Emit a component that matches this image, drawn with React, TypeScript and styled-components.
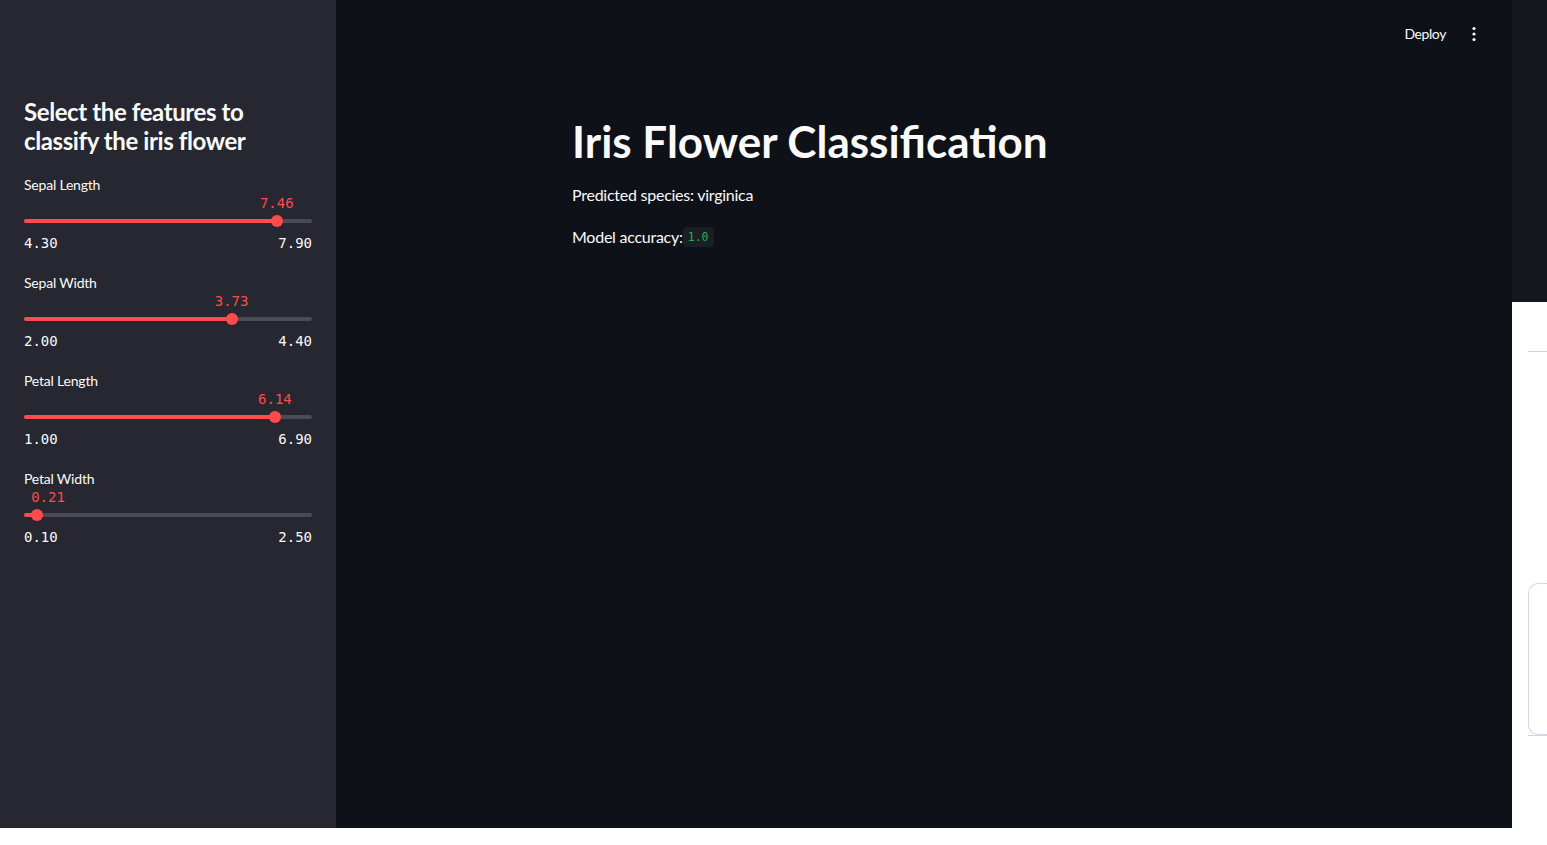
import React from "react";
import styled, { createGlobalStyle } from "styled-components";

const Global = createGlobalStyle`
  html, body { margin: 0; padding: 0; background: #ffffff; }
  body { font-family: Lato, "Noto Sans", sans-serif; }
  * { box-sizing: border-box; }
`;

const Page = styled.div`
  display: flex;
  flex-direction: row;
  width: 1547px;
  height: 845px;
  align-items: flex-start;
`;

const AppFrame = styled.div`
  display: flex;
  flex-direction: row;
  width: 1512px;
  height: 828px;
  flex-shrink: 0;
`;

const Sidebar = styled.aside`
  width: 336px;
  height: 100%;
  background: #262730;
  padding: 98px 24px 0 24px;
  display: flex;
  flex-direction: column;
  gap: 18px;
  color: #fafafa;
`;

const SideHeading = styled.h2`
  margin: 0 0 0.5px 0;
  font-family: Lato, sans-serif;
  font-weight: 700;
  font-size: 24px;
  line-height: 28.8px;
  letter-spacing: -0.4px;
  color: #fafafa;
`;

const SliderBlock = styled.div`
  display: flex;
  flex-direction: column;
`;

const SliderLabel = styled.div`
  font-family: Lato, sans-serif;
  font-size: 14px;
  line-height: 21px;
  height: 21px;
  color: #fafafa;
  letter-spacing: -0.2px;
`;

const ValueRow = styled.div`
  position: relative;
  height: 17px;
`;

const ThumbValue = styled.span<{ $edge: boolean }>`
  position: absolute;
  top: 0;
  transform: ${(p) => (p.$edge ? "none" : "translateX(-50%)")};
  font-family: "DejaVu Sans Mono", "Liberation Mono", monospace;
  font-size: 14px;
  line-height: 17px;
  color: #ff4b4b;
  white-space: nowrap;
`;

const TrackRow = styled.div`
  position: relative;
  height: 17px;
  display: flex;
  align-items: center;
`;

const Track = styled.div`
  position: relative;
  width: 100%;
  height: 4px;
  border-radius: 2px;
  background: #4a4b55;
`;

const Fill = styled.div`
  position: absolute;
  left: 0;
  top: 0;
  height: 4px;
  border-radius: 2px;
  background: #ff4b4b;
`;

const Thumb = styled.div`
  position: absolute;
  top: 50%;
  width: 12px;
  height: 12px;
  border-radius: 50%;
  background: #ff4b4b;
  transform: translate(-50%, -50%);
`;

const TickRow = styled.div`
  margin-top: 4px;
  display: flex;
  justify-content: space-between;
  font-family: "DejaVu Sans Mono", "Liberation Mono", monospace;
  font-size: 14px;
  line-height: 21px;
  color: #fafafa;
`;

const Main = styled.main`
  flex: 1;
  height: 100%;
  background: #0e1117;
  display: flex;
  flex-direction: column;
`;

const Header = styled.header`
  height: 68px;
  display: flex;
  align-items: center;
  justify-content: flex-end;
  padding-right: 30px;
  gap: 20px;
`;

const DeployButton = styled.button`
  background: transparent;
  border: none;
  padding: 0;
  color: #fafafa;
  font-family: Lato, sans-serif;
  font-size: 14px;
  line-height: 20px;
  letter-spacing: -0.4px;
  cursor: pointer;
`;

const MenuButton = styled.button`
  background: transparent;
  border: none;
  padding: 0;
  width: 16px;
  height: 20px;
  display: flex;
  align-items: center;
  justify-content: center;
  cursor: pointer;
`;

const Content = styled.div`
  width: 736px;
  margin: 0 auto;
  padding: 46.6px 16px 0 16px;
  display: flex;
  flex-direction: column;
`;

const Title = styled.h1`
  margin: 0 0 15.6px 0;
  font-family: Lato, sans-serif;
  font-weight: 700;
  font-size: 44px;
  line-height: 52.8px;
  letter-spacing: 0px;
  color: #fafafa;
`;

const Para = styled.p`
  margin: 0 0 18px 0;
  font-family: Lato, sans-serif;
  font-size: 16px;
  line-height: 24px;
  letter-spacing: -0.25px;
  color: #fafafa;
  display: flex;
  align-items: center;
  gap: 0px;
`;

const Code = styled.code`
  font-family: "DejaVu Sans Mono", "Liberation Mono", monospace;
  font-size: 11.5px;
  line-height: 20px;
  padding: 0 5px;
  border-radius: 4px;
  background: #1c1e26;
  color: #21b24d;
  letter-spacing: 0;
`;

const Strip = styled.div`
  width: 35px;
  height: 845px;
  display: flex;
  flex-direction: column;
  background: #ffffff;
`;

const StripDark = styled.div`
  height: 302px;
  background: #16171d;
`;

const StripLine = styled.div`
  margin: 49px 0 0 16px;
  height: 1px;
  background: #d4d2e0;
`;

const StripBox = styled.div`
  margin: 231px 0 0 16px;
  height: 152px;
  border: 1px solid #d6d5e2;
  border-right: none;
  border-radius: 10px 0 0 10px;
`;

const StripBottomLine = styled.div`
  margin: 0 0 0 16px;
  height: 1px;
  background: #d4d2e0;
`;

type SliderProps = { label: string; min: number; max: number; value: number };

function Slider({ label, min, max, value }: SliderProps) {
  const pct = ((value - min) / (max - min)) * 100;
  const edge = pct < 10;
  return (
    <SliderBlock>
      <SliderLabel>{label}</SliderLabel>
      <ValueRow>
        <ThumbValue
          $edge={edge}
          style={{ left: edge ? `calc(${pct}% - 6px)` : `${pct}%` }}
        >
          {value.toFixed(2)}
        </ThumbValue>
      </ValueRow>
      <TrackRow>
        <Track>
          <Fill style={{ width: `${pct}%` }} />
          <Thumb style={{ left: `${pct}%` }} />
        </Track>
      </TrackRow>
      <TickRow>
        <span>{min.toFixed(2)}</span>
        <span>{max.toFixed(2)}</span>
      </TickRow>
    </SliderBlock>
  );
}

export default function App() {
  return (
    <>
      <Global />
      <Page>
        <AppFrame>
          <Sidebar>
            <SideHeading>
              Select the features to
              <br />
              classify the iris flower
            </SideHeading>
            <Slider label="Sepal Length" min={4.3} max={7.9} value={7.46} />
            <Slider label="Sepal Width" min={2.0} max={4.4} value={3.73} />
            <Slider label="Petal Length" min={1.0} max={6.9} value={6.14} />
            <Slider label="Petal Width" min={0.1} max={2.5} value={0.21} />
          </Sidebar>
          <Main>
            <Header>
              <DeployButton>Deploy</DeployButton>
              <MenuButton aria-label="menu">
                <svg width="6" height="16" viewBox="0 0 6 16">
                  <circle cx="3" cy="2.5" r="1.6" fill="#fafafa" />
                  <circle cx="3" cy="8" r="1.6" fill="#fafafa" />
                  <circle cx="3" cy="13.5" r="1.6" fill="#fafafa" />
                </svg>
              </MenuButton>
            </Header>
            <Content>
              <Title>Iris Flower Classification</Title>
              <Para>Predicted species: virginica</Para>
              <Para>
                Model accuracy: <Code>1.0</Code>
              </Para>
            </Content>
          </Main>
        </AppFrame>
        <Strip>
          <StripDark />
          <StripLine />
          <StripBox />
          <StripBottomLine />
        </Strip>
      </Page>
    </>
  );
}
